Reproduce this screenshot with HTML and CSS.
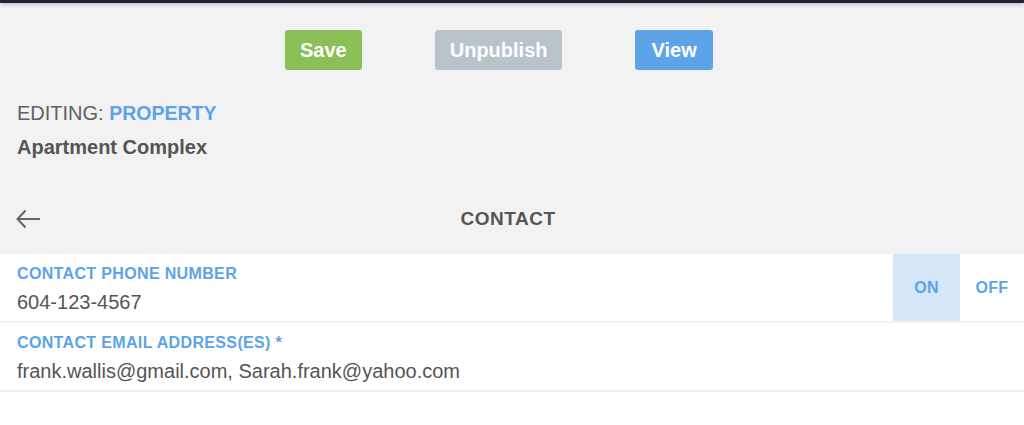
FILE: index.html
```html
<!DOCTYPE html>
<html lang="en">

<head>
    <meta charset="UTF-8">
    <meta name="viewport" content="width=device-width, initial-scale=1.0">
    <title>Edit Property - Contact</title>
    <link rel="stylesheet" href="styles.css">
</head>

<body>
    <div class="topbar"></div>

    <div class="header">
        <div class="actions">
            <button type="button" class="btn btn-save">Save</button>
            <button type="button" class="btn btn-unpublish">Unpublish</button>
            <button type="button" class="btn btn-view">View</button>
        </div>

        <div class="editing">EDITING: <span class="editing-type">PROPERTY</span></div>
        <div class="editing-name">Apartment Complex</div>

        <div class="nav">
            <a class="back" href="#">
                <svg width="24" height="20" viewBox="0 0 24 20" fill="none" stroke="#666" stroke-width="2">
                    <path d="M1.5 10H24" />
                    <path d="M9.5 1.5L1.5 10L9.5 18.5" />
                </svg>
            </a>
            <div class="nav-title">CONTACT</div>
            <div></div>
        </div>
    </div>

    <div class="fields">
        <div class="field-row">
            <div class="field">
                <div class="field-label">CONTACT PHONE NUMBER</div>
                <div class="field-value">604-123-4567</div>
            </div>
            <div class="toggle toggle-on">ON</div>
            <div class="toggle">OFF</div>
        </div>
        <div class="field-row">
            <div class="field">
                <div class="field-label">CONTACT EMAIL ADDRESS(ES) *</div>
                <div class="field-value">frank.wallis@gmail.com, Sarah.frank@yahoo.com</div>
            </div>
        </div>
    </div>
</body>

</html>
```

FILE: styles.css
```css
body {
    margin: 0;
    background-color: #fff;
    font-family: "Liberation Sans", Arial, sans-serif;
    color: #555;
    overflow: hidden;
}

.topbar {
    height: 3px;
    background-color: #20232f;
    box-shadow: 0 1px 4px rgba(0, 0, 0, 0.3);
    position: relative;
}

.header {
    background-color: #f2f2f2;
    padding: 27px 0 7px 17px;
}

.actions {
    display: flex;
    gap: 73px;
    padding-left: 268px;
}

.btn {
    height: 40px;
    padding: 0 15px;
    border: none;
    border-radius: 3px;
    color: #fff;
    font-family: inherit;
    font-size: 20px;
    font-weight: bold;
    cursor: pointer;
}

.btn-save {
    background-color: #8bc057;
}

.btn-unpublish {
    background-color: #b8c3ca;
}

.btn-view {
    padding: 0 16px;
    background-color: #5ca3e8;
}

.editing {
    margin-top: 31px;
    font-size: 20px;
    line-height: 24px;
    color: #606060;
}

.editing-type {
    font-size: 19.5px;
    color: #5ca3e8;
    font-weight: bold;
}

.editing-name {
    margin-top: 10px;
    font-size: 20px;
    line-height: 24px;
    font-weight: bold;
}

.nav {
    margin-top: 32px;
    height: 56px;
    display: grid;
    grid-template-columns: 1fr auto 1fr;
    align-items: center;
    margin-left: -1px;
    padding-right: 24px;
}

.back {
    display: flex;
}

.nav-title {
    font-size: 19px;
    font-weight: bold;
    letter-spacing: 0.5px;
    color: #555;
}

.field-row {
    display: flex;
    border-bottom: 2px solid #f2f2f2;
}

.field {
    flex: 1;
    padding: 10px 17px 7px;
}

.field-label {
    font-size: 16px;
    line-height: 20px;
    font-weight: bold;
    letter-spacing: 0.35px;
    color: #5ca3e8;
}

.field-value {
    margin-top: 6px;
    font-size: 20px;
    line-height: 24px;
    color: #555;
}

.toggle {
    width: 64px;
    display: flex;
    align-items: center;
    justify-content: center;
    font-size: 16px;
    font-weight: bold;
    letter-spacing: 0.3px;
    color: #5ca3e8;
}

.toggle-on {
    width: 67px;
    background-color: #d4e6f7;
}
```
